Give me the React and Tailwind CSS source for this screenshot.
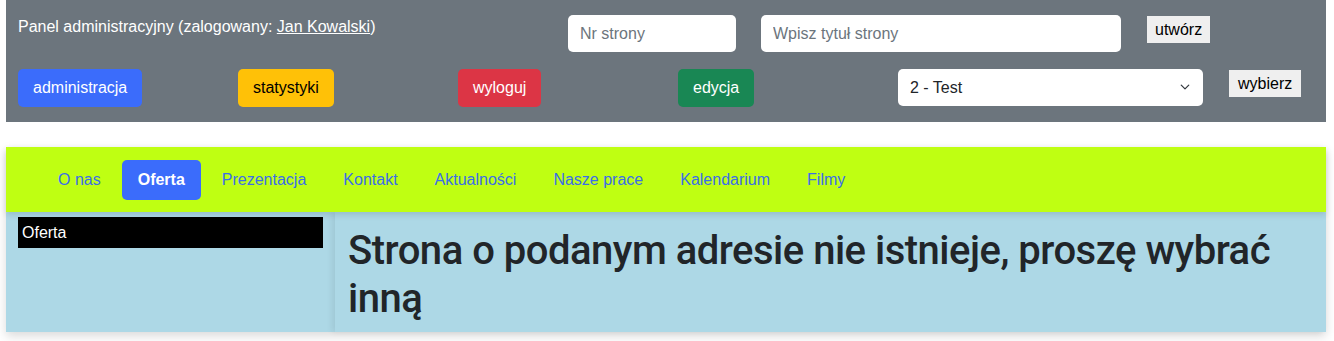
import React from 'react'

const font = { fontFamily: '"Liberation Sans", Arial, sans-serif' }

const menu = ['O nas', 'Oferta', 'Prezentacja', 'Kontakt', 'Aktualności', 'Nasze prace', 'Kalendarium', 'Filmy']

function Btn({ className, children }) {
  return (
    <button className={`h-[38px] px-[15px] rounded-[5px] text-[16px] leading-6 ${className}`}>
      {children}
    </button>
  )
}

export default function App() {
  return (
    <div className="w-[1334px] h-[341px] bg-white px-[6px] overflow-hidden" style={font}>
      {/* panel administracyjny */}
      <div className="w-[1320px] h-[122px] bg-[#6c757d] px-3 pt-[15px]">
        <div className="flex items-start">
          <div className="w-[550px] pt-[1px] text-[16px] leading-[21px] text-white">
            Panel administracyjny (zalogowany: <a href="#" className="underline">Jan Kowalski</a>)
          </div>
          <input
            placeholder="Nr strony"
            className="w-[168px] h-[37px] rounded-[5px] bg-white px-3 text-[16px] text-[#212529] placeholder:text-[#6c757d] outline-none"
          />
          <input
            placeholder="Wpisz tytuł strony"
            className="ml-[25px] w-[360px] h-[37px] rounded-[5px] bg-white px-3 text-[16px] text-[#212529] placeholder:text-[#6c757d] outline-none"
          />
          <button className="ml-[26px] mt-[1px] h-[27px] px-[8px] bg-[#efefef] text-[16px] text-black">utwórz</button>
        </div>
        <div className="flex items-start mt-[17px]">
          <div className="w-[220px]">
            <Btn className="bg-[#3b6cfb] text-white">administracja</Btn>
          </div>
          <div className="w-[220px]">
            <Btn className="bg-[#ffc107] text-black">statystyki</Btn>
          </div>
          <div className="w-[220px]">
            <Btn className="bg-[#dc3545] text-white">wyloguj</Btn>
          </div>
          <div className="w-[220px]">
            <Btn className="bg-[#198754] text-white">edycja</Btn>
          </div>
          <div className="relative w-[305px] h-[37px]">
            <select className="appearance-none w-full h-full rounded-[5px] bg-white pl-3 text-[16px] text-[#212529] outline-none" defaultValue="2">
              <option value="2">2 - Test</option>
            </select>
            <svg className="absolute right-[12px] top-[13px] pointer-events-none" width="12" height="10" viewBox="0 0 16 16">
              <path d="M2 5l6 6 6-6" fill="none" stroke="#343a40" strokeWidth="2" strokeLinecap="round" strokeLinejoin="round" />
            </svg>
          </div>
          <button className="ml-[26px] mt-[1px] h-[27px] px-[9px] bg-[#efefef] text-[16px] text-black">wybierz</button>
        </div>
      </div>

      {/* strona */}
      <div className="mt-[25px] w-[1320px] shadow-[0_4px_10px_rgba(0,0,0,0.15)]">
        <nav className="relative z-10 h-[65px] bg-[#bfff12] pl-[36px] pt-[13px] shadow-[0_3px_6px_rgba(0,0,0,0.12)]">
          <ul className="flex gap-[5px]">
            {menu.map((m) => (
              <li key={m}>
                <a
                  href="#"
                  className={
                    m === 'Oferta'
                      ? 'block h-10 px-4 py-2 rounded-[5px] bg-[#3b6cfb] text-white font-bold text-[16px] leading-6'
                      : 'block h-10 px-4 py-2 rounded-[5px] text-[#3b6ee8] text-[16px] leading-6'
                  }
                >
                  {m}
                </a>
              </li>
            ))}
          </ul>
        </nav>
        <div className="flex bg-[#add8e6] h-[120px]">
          <aside className="w-[329px] shrink-0 px-3 pt-[5px]">
            <div className="h-[31px] bg-black text-white text-[16px] leading-[31px] px-1">Oferta</div>
          </aside>
          <main className="flex-1 px-[13px] pt-[15px] shadow-[-3px_0_6px_rgba(0,0,0,0.08)]">
            <h1 className="font-['Roboto',sans-serif] text-[40px] leading-[48px] font-medium tracking-[-0.5px] text-[#212529]">
              Strona o podanym adresie nie istnieje, proszę wybrać inną
            </h1>
          </main>
        </div>
      </div>
    </div>
  )
}
